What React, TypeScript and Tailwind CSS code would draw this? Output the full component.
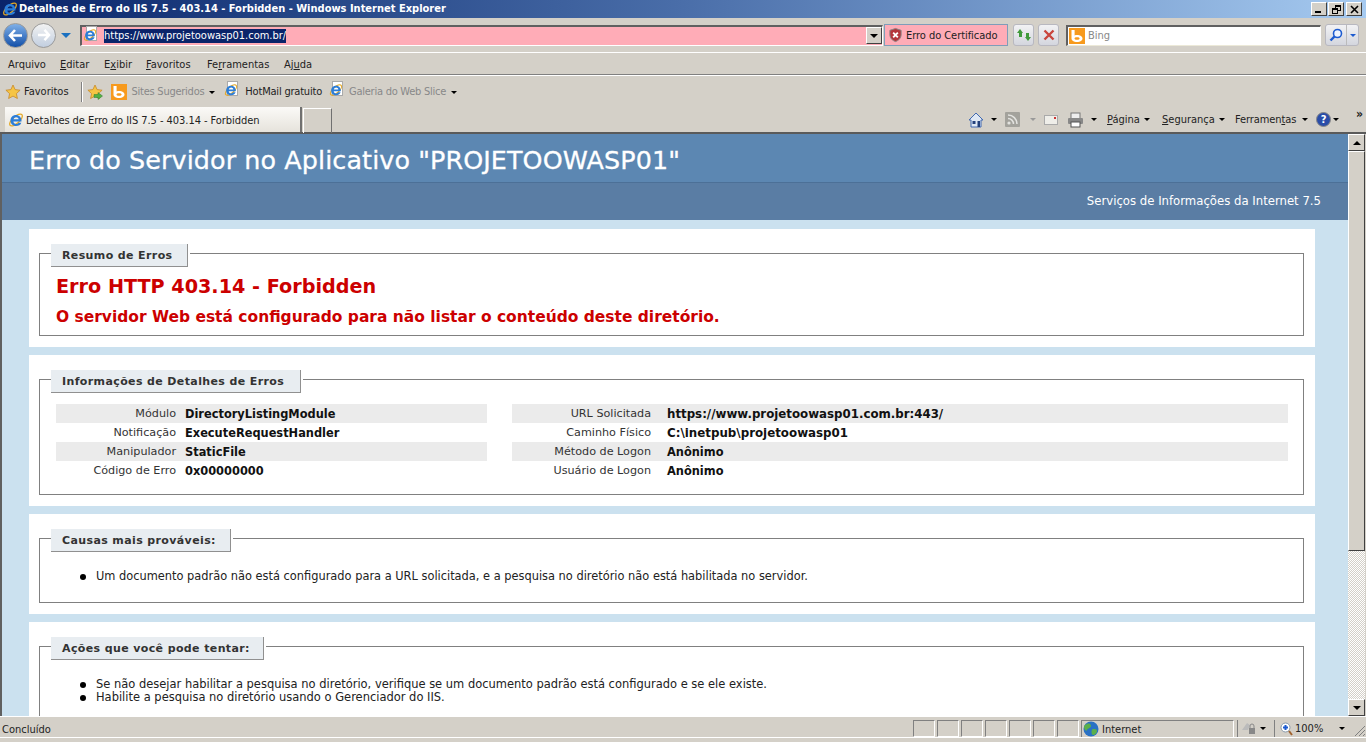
const Caret = ({ gray }: { gray?: boolean }) => (
  <span className={`inline-block w-0 h-0 border-x-[3px] border-x-transparent border-t-[3px] ${gray ? 'border-t-[#999]' : 'border-t-black'}`} />
);

const IeLogo = ({ size = 16 }: { size?: number }) => (
  <svg width={size} height={size} viewBox="0 0 16 16" className="shrink-0">
    <ellipse cx="8" cy="8" rx="8" ry="3.400" transform="rotate(-42 8 8)" fill="none" stroke="#e5a823" strokeWidth="1.300" />
    <path d="M2.500 8.500C2.500 5.200 5 3 8 3s5.500 2.200 5.500 5.800V9.500H5.400c.1 1.600 1.200 2.500 2.700 2.500 1.100 0 1.900-.4 2.400-1.300h2.800C12.600 12.800 10.600 14 8 14c-3.200 0-5.500-2.300-5.500-5.500Zm3-1.200h5.200C10.500 6 9.400 5.200 8.100 5.200S5.700 6 5.500 7.300Z" fill="#2b7dd8" />
  </svg>
);

const PageIe = () => (
  <span className="relative inline-block w-[16px] h-[16px] shrink-0">
    <span className="absolute left-[3px] top-0 w-[11px] h-[15px] bg-white border border-[#aaa]" />
    <span className="absolute left-0 top-[2px]"><IeLogo size={14} /></span>
  </span>
);

const BingLogo = ({ size = 16 }: { size?: number }) => (
  <svg width={size} height={size} viewBox="0 0 16 16" className="shrink-0">
    <rect width="16" height="16" fill="#f79a1d" />
    <path d="M2.500 2v8.500c0 2.200 2.500 3.500 5.500 3.500s5.500-1.300 5.500-3.500S11 7 8 7c-.9 0-1.700.1-2.400.4V2Zm5.500 7.200c1.600 0 2.600.5 2.600 1.300S9.600 11.800 8 11.800s-2.500-.5-2.500-1.300.9-1.300 2.500-1.300Z" fill="#fff" />
  </svg>
);

const Star = ({ size = 16, arrow }: { size?: number; arrow?: boolean }) => (
  <svg width={size} height={size} viewBox="0 0 16 16" className="shrink-0">
    <path d="M8 1l2.100 4.600 5 .6-3.700 3.400 1 4.900L8 12.100l-4.400 2.400 1-4.900L.9 6.200l5-.6Z" fill="#f6c544" stroke="#c8892a" strokeWidth="0.8" />
    {arrow && <path d="M7 10.500h4V8.500l4.500 3.500-4.500 3.500v-2H7Z" fill="#52b043" stroke="#2e7d2a" strokeWidth="0.5" />}
  </svg>
);

const WinBtn = ({ children }: { children: React.ReactNode }) => (
  <div className="w-[16px] h-[14px] bg-[#d4d0c8] border-t border-l border-white border-r border-b border-r-[#404040] border-b-[#404040] flex items-center justify-center">{children}</div>
);

const Fieldset = ({ legend, legendWidth, height, children }: { legend: string; legendWidth: number; height: number; children?: React.ReactNode }) => (
  <div className="ml-[27px] mr-[33px] bg-white pl-[10px] pr-[11px] pt-[24px] pb-[11px] mb-[8px]">
    <div className="relative border border-[#808080]" style={{ height }}>
      <div className="absolute left-[11px] top-[-10px] h-[23px] bg-white pr-[2px]">
        <div className="h-[23px] bg-[#e8edf1] border-r border-b border-[#909090] font-bold text-[11px] text-[#333] pl-[11px] leading-[23px] tracking-[0.38px] whitespace-nowrap" style={{ width: legendWidth }}>{legend}</div>
      </div>
      {children}
    </div>
  </div>
);

const Row = ({ label, value, shade, labelW, gap, size }: { label: string; value: string; shade: boolean; labelW: number; gap: number; size: number }) => (
  <div className={`flex h-[19px] items-center pt-[2px] text-[11px] ${shade ? 'bg-[#ebebeb]' : ''}`}>
    <div className="text-right text-[#333] shrink-0 text-[11.2px]" style={{ width: labelW }}>{label}</div>
    <div className="font-bold text-[#111]" style={{ marginLeft: gap, fontSize: size }}>{value}</div>
  </div>
);

const Bullet = ({ children }: { children: React.ReactNode }) => (
  <li className="relative leading-[13px] whitespace-nowrap">
    <span className="absolute left-[-16px] top-[4px] w-[6px] h-[6px] rounded-full bg-black" />
    {children}
  </li>
);

const chrome = '[font-family:"DejaVu_Sans_Condensed","DejaVu_Sans",sans-serif]';

export default function App() {
  return (
    <div className="w-[1366px] h-[742px] overflow-hidden bg-[#d4d0c8] flex flex-col text-black [font-family:'Noto_Sans',sans-serif]">
      {/* title bar */}
      <div className="h-[18px] shrink-0 flex items-center bg-gradient-to-r from-[#0a246a] via-[#4a6ea9] to-[#a6caf0] pl-[2px] pr-[4px]">
        <IeLogo size={16} />
        <span className={`ml-[1px] text-white font-bold text-[11px] whitespace-nowrap ${chrome}`}>Detalhes de Erro do IIS 7.5 - 403.14 - Forbidden - Windows Internet Explorer</span>
        <div className="ml-auto flex">
          <WinBtn><span className="block w-[6px] h-[2px] bg-black mt-[6px] mr-[2px]" /></WinBtn>
          <div className="w-[1px]" />
          <WinBtn><span className="relative block w-[9px] h-[9px]"><span className="absolute right-0 top-0 w-[6px] h-[6px] border border-t-2 border-black" /><span className="absolute left-0 bottom-0 w-[6px] h-[6px] border border-t-2 border-black bg-[#d4d0c8]" /></span></WinBtn>
          <div className="w-[2px]" />
          <WinBtn><svg width="9" height="9" viewBox="0 0 9 9"><path d="M1 1l7 7M8 1L1 8" stroke="#000" strokeWidth="1.600" /></svg></WinBtn>
        </div>
      </div>

      {/* address row */}
      <div className="h-[35px] shrink-0 relative flex items-center border-b border-white">
        <div className="ml-[3px] w-[25px] h-[25px] rounded-full bg-gradient-to-b from-[#7fb0e8] to-[#0f4fa8] border border-[#9a9a9a] flex items-center justify-center">
          <svg width="15" height="13" viewBox="0 0 15 13"><path d="M7 1L2 6.500 7 12M2.500 6.500H14" stroke="#fff" strokeWidth="2.600" fill="none" /></svg>
        </div>
        <div className="ml-[3px] w-[25px] h-[25px] rounded-full bg-gradient-to-b from-[#f2f2f2] to-[#c2cfe0] border border-[#9a9a9a] flex items-center justify-center">
          <svg width="14" height="12" viewBox="0 0 15 13"><path d="M8 1l5 5.500L8 12M12.500 6.500H1" stroke="#fff" strokeWidth="2.600" fill="none" /></svg>
        </div>
        <span className="ml-[5px] w-0 h-0 border-x-[5px] border-x-transparent border-t-[5px] border-t-[#1a70c0]" />
        <div className="ml-[9px] w-[803px] h-[21px] flex items-center bg-[#ffacb7] border-t-2 border-l-2 border-[#606060] border-r border-r-[#fff] border-b border-b-[#fff]">
          <span className="ml-[1px]"><PageIe /></span>
          <span className={`ml-[5px] mt-[1px] bg-[#0a246a] text-white text-[11px] leading-[14px] h-[14px] ${chrome}`}>https://www.projetoowasp01.com.br/</span>
          <div className="ml-auto w-[16px] h-[17px] bg-[#d4d0c8] border border-t-white border-l-white border-r-[#404040] border-b-[#404040] flex items-center justify-center"><span className="w-0 h-0 border-x-[4px] border-x-transparent border-t-[4px] border-t-black" /></div>
        </div>
        <div className="ml-[1px] w-[124px] h-[22px] flex items-center bg-[#ffacb7] border border-[#7f9db9]">
          <svg width="15" height="16" viewBox="0 0 16 16" className="ml-[3px] shrink-0"><path d="M8 1l6 2v5c0 3.500-3 6-6 7-3-1-6-3.500-6-7V3Z" fill="#b4353b" stroke="#888" /><path d="M5.500 5.500l5 5M10.500 5.500l-5 5" stroke="#fff" strokeWidth="2" /></svg>
          <span className={`ml-[3px] mt-[2px] text-[11px] text-[#222] whitespace-nowrap tracking-[-0.05px] ${chrome}`}>Erro do Certificado</span>
        </div>
        <div className="ml-[5px] w-[21px] h-[22px] rounded-[3px] border border-[#b8b8c0] bg-gradient-to-b from-[#f2f2f4] to-[#d4d6de] flex items-center justify-center">
          <svg width="16" height="14" viewBox="0 0 16 14"><path d="M4 1L1 5h2v4h3V5h1ZM12 13l3-4h-2V5h-3v4H9Z" fill="#3f9a3a" /></svg>
        </div>
        <div className="ml-[4px] w-[21px] h-[22px] rounded-[3px] border border-[#b8b8c0] bg-gradient-to-b from-[#f2f2f4] to-[#d4d6de] flex items-center justify-center">
          <svg width="12" height="12" viewBox="0 0 12 12"><path d="M1.500 1.500l9 9M10.500 1.500l-9 9" stroke="#c9453d" strokeWidth="2.400" /></svg>
        </div>
        <div className="ml-[7px] w-[255px] h-[21px] flex items-center bg-white border-t-2 border-l-2 border-[#606060] border-r border-b border-r-white border-b-[#ece9d8]">
          <span className="ml-[1px]"><BingLogo /></span>
          <span className={`ml-[3px] mt-[2px] text-[11px] text-[#888] ${chrome}`}>Bing</span>
        </div>
        <div className="ml-[4px] w-[34px] h-[22px] rounded-[3px] border border-[#b8b8c0] bg-gradient-to-b from-[#f2f2f4] to-[#d4d6de] flex items-center">
          <div className="w-[21px] flex items-center justify-center border-r border-[#bbb] h-full">
            <svg width="14" height="14" viewBox="0 0 14 14"><circle cx="8.500" cy="5.500" r="4" fill="#eef4ff" stroke="#1c5bd0" strokeWidth="1.600" /><path d="M5.500 8.500L1.500 12.500" stroke="#1c5bd0" strokeWidth="2.400" /></svg>
          </div>
          <span className="ml-[3px] w-0 h-0 border-x-[3px] border-x-transparent border-t-[3px] border-t-[#1c5bd0]" />
        </div>
      </div>

      {/* menu bar */}
      <div className={`h-[22px] shrink-0 flex items-center pl-[8px] pt-[3px] text-[11px] text-[#222] border-b border-[#808080] ${chrome}`}>
        <span className="w-[52px]">Arquivo</span>
        <span className="w-[44px]"><u>E</u>ditar</span>
        <span className="w-[42px]">E<u>x</u>ibir</span>
        <span className="w-[61px]"><u>F</u>avoritos</span>
        <span className="w-[77px]">Fe<u>r</u>ramentas</span>
        <span className="w-[40px]">Aj<u>u</u>da</span>
      </div>

      {/* favorites bar */}
      <div className={`h-[29px] shrink-0 flex items-center pl-[5px] pt-[3px] text-[11px] text-[#222] border-t border-white ${chrome}`}>
        <Star />
        <span className="ml-[3px] mt-[2px]">Favoritos</span>
        <span className="ml-[12px] w-[2px] h-[20px] border-l border-[#808080] border-r border-r-white" />
        <span className="ml-[4px]"><Star arrow /></span>
        <span className="ml-[8px]"><BingLogo /></span>
        <span className="ml-[5px] mt-[2px] text-[#888] tracking-[-0.25px]">Sites Sugeridos</span>
        <span className="ml-[5px] mt-[1px] flex"><Caret /></span>
        <span className="ml-[9px]"><PageIe /></span>
        <span className="ml-[5px] mt-[2px] tracking-[-0.2px]">HotMail gratuito</span>
        <span className="ml-[7px]"><PageIe /></span>
        <span className="ml-[4px] mt-[2px] text-[#888] tracking-[-0.25px]">Galeria do Web Slice</span>
        <span className="ml-[5px] mt-[1px] flex"><Caret /></span>
      </div>

      {/* tab row */}
      <div className={`h-[30px] shrink-0 flex text-[11px] text-[#222] pl-[5px] pt-[3px] border-b-2 border-[#5a5a5a] ${chrome}`}>
        <div className="w-[297px] h-[25px] bg-gradient-to-b from-[#fbfaf7] to-[#e6e3dc] flex items-center pl-[3px] border-r-2 border-[#707070]">
          <IeLogo size={16} />
          <span className="ml-[2px] mt-[3px] whitespace-nowrap tracking-[-0.05px]">Detalhes de Erro do IIS 7.5 - 403.14 - Forbidden</span>
        </div>
        <div className="ml-[1px] w-[29px] h-[25px] mt-[1px] border-t border-l border-white border-r border-r-[#707070]" />
        <div className="ml-auto flex items-center h-[24px] pr-[3px] pt-[1px]">
          <svg width="16" height="16" viewBox="0 0 16 16"><path d="M8 1L1 8h2v7h10V8h2Z" fill="#dfe8f5" stroke="#4169b0" /><rect x="4.500" y="9" width="3" height="3" fill="#24417c" /><rect x="9.500" y="9" width="2.500" height="6" fill="#24417c" /></svg>
          <span className="ml-[7px] flex"><Caret /></span>
          <svg width="15" height="15" viewBox="0 0 15 15" className="ml-[8px]"><rect width="15" height="15" rx="1" fill="#a3a29c" /><circle cx="4" cy="11" r="1.600" fill="#e3e3e0" /><path d="M3 6.500a5.500 5.500 0 0 1 5.500 5.500M3 3a9 9 0 0 1 9 9" stroke="#e3e3e0" strokeWidth="1.500" fill="none" /></svg>
          <span className="ml-[10px] flex"><Caret gray /></span>
          <span className="ml-[8px] w-[14px] h-[10px] bg-[#efeee9] border border-[#aaa] relative"><span className="absolute right-[1px] top-[1px] w-[2px] h-[2px] bg-[#c33]" /></span>
          <svg width="17" height="16" viewBox="0 0 17 16" className="ml-[9px]"><rect x="4" y="1" width="9" height="6" fill="#eee" stroke="#777" /><rect x="1" y="6" width="15" height="6" rx="1" fill="#888" /><rect x="4" y="10" width="9" height="5" fill="#fff" stroke="#555" /></svg>
          <span className="ml-[7px] flex"><Caret /></span>
          <span className="ml-[10px] mt-[2px] w-[33px]"><u>P</u>ágina</span><span className="ml-[4px] flex"><Caret /></span>
          <span className="ml-[12px] mt-[2px] w-[52px]"><u>S</u>egurança</span><span className="ml-[5px] flex"><Caret /></span>
          <span className="ml-[10px] mt-[2px] w-[62px] tracking-[-0.1px] whitespace-nowrap">Ferramen<u>t</u>as</span><span className="ml-[5px] flex"><Caret /></span>
          <span className="ml-[8px] w-[15px] h-[15px] rounded-full bg-[#2a4da8] border border-[#888] text-white font-bold text-[11px] leading-[13px] text-center">?</span>
          <span className="ml-[2px] flex"><Caret /></span>
          <span className="ml-[17px] -mt-[12px] text-[12px] font-bold leading-none">»</span>
        </div>
      </div>

      {/* page + scrollbar */}
      <div className="flex-1 min-h-0 flex overflow-hidden border-l-2 border-[#606060] pr-[1px]">
        <div className="flex-1 min-w-0 bg-[#cbe1ef] overflow-hidden [font-family:'DejaVu_Sans',sans-serif]">
          <div className="h-[49px] bg-[#5c87b2] border-b border-[#4c7097] pl-[27px] text-white text-[25.4px] leading-[53px] tracking-[0.1px] [-webkit-text-stroke:0.3px_white] whitespace-nowrap">Erro do Servidor no Aplicativo "PROJETOOWASP01"</div>
          <div className="h-[37px] bg-[#5a7da4] text-right pr-[27px] text-white text-[11.7px] leading-[36px]">Serviços de Informações da Internet 7.5</div>

          <div className="pt-[9px]">
            <Fieldset legend="Resumo de Erros" legendWidth={137} height={83}>
              <div className="pl-[16px] pt-[20px] font-bold text-[#cc0000]">
                <div className="text-[19.2px] leading-[26px]">Erro HTTP 403.14 - Forbidden</div>
                <div className="text-[15.47px] leading-[19px] mt-[8px] whitespace-nowrap">O servidor Web está configurado para não listar o conteúdo deste diretório.</div>
              </div>
            </Fieldset>
            <Fieldset legend="Informações de Detalhes de Erros" legendWidth={250} height={116}>
              <div className="flex pl-[16px] pt-[24px] gap-[25px] pr-[15px]">
                <div className="w-[431px]">
                  <Row label="Módulo" value="DirectoryListingModule" shade labelW={120} gap={9} size={11.4} />
                  <Row label="Notificação" value="ExecuteRequestHandler" shade={false} labelW={120} gap={9} size={11.4} />
                  <Row label="Manipulador" value="StaticFile" shade labelW={120} gap={9} size={11.4} />
                  <Row label="Código de Erro" value="0x00000000" shade={false} labelW={120} gap={9} size={11.4} />
                </div>
                <div className="flex-1">
                  <Row label="URL Solicitada" value="https://www.projetoowasp01.com.br:443/" shade labelW={139} gap={16} size={11.8} />
                  <Row label="Caminho Físico" value="C:\inetpub\projetoowasp01" shade={false} labelW={139} gap={16} size={11.85} />
                  <Row label="Método de Logon" value="Anônimo" shade labelW={139} gap={16} size={11.4} />
                  <Row label="Usuário de Logon" value="Anônimo" shade={false} labelW={139} gap={16} size={11.4} />
                </div>
              </div>
            </Fieldset>
            <Fieldset legend="Causas mais prováveis:" legendWidth={180} height={65}>
              <ul className="pl-[56px] pt-[31px] text-[11.4px] text-[#222]">
                <Bullet>Um documento padrão não está configurado para a URL solicitada, e a pesquisa no diretório não está habilitada no servidor.</Bullet>
              </ul>
            </Fieldset>
            <Fieldset legend="Ações que você pode tentar:" legendWidth={213} height={120}>
              <ul className="pl-[56px] pt-[31px] text-[11.47px] text-[#222]">
                <Bullet>Se não desejar habilitar a pesquisa no diretório, verifique se um documento padrão está configurado e se ele existe.</Bullet>
                <Bullet>Habilite a pesquisa no diretório usando o Gerenciador do IIS.</Bullet>
              </ul>
              <div className="pl-[97px] mt-[12px] text-[11.4px] leading-[13px] text-[#222]">Abra o Gerenciador do IIS.</div>
            </Fieldset>
          </div>
        </div>
        {/* scrollbar */}
        <div className="w-[17px] shrink-0 flex flex-col bg-[repeating-conic-gradient(#d4d0c8_0%_25%,#fff_0%_50%)] bg-[length:2px_2px]">
          <div className="h-[17px] bg-[#d4d0c8] border border-t-white border-l-white border-r-[#404040] border-b-[#404040] flex items-center justify-center"><span className="w-0 h-0 border-x-[4px] border-x-transparent border-b-[4px] border-b-black" /></div>
          <div className="h-[400px] bg-[#d4d0c8] border border-t-white border-l-white border-r-[#404040] border-b-[#404040]" />
          <div className="mt-auto h-[17px] bg-[#d4d0c8] border border-t-white border-l-white border-r-[#404040] border-b-[#404040] flex items-center justify-center"><span className="w-0 h-0 border-x-[4px] border-x-transparent border-t-[4px] border-t-black" /></div>
        </div>
      </div>

      {/* status bar */}
      <div className={`h-[26px] shrink-0 text-[11px] text-[#222] border-t border-white pt-[3px] ${chrome}`}>
        <div className="h-[18px] flex items-center pl-[2px] border-b border-white">
          <span className="mt-[3px]">Concluído</span>
          <div className="ml-auto flex h-[17px]">
            {[0, 1, 2, 3, 4, 5, 6].map(i => (
              <div key={i} className="w-[22px] mr-[2px] border-t border-l border-[#808080] border-r border-b border-r-white border-b-white" />
            ))}
            <div className="w-[153px] flex items-center border-t border-l border-[#808080] border-r border-r-white pl-[1px]">
              <svg width="16" height="16" viewBox="0 0 16 16"><circle cx="8" cy="8" r="7.500" fill="#2a71c4" /><path d="M4 3c2-1 4 0 4 2S5 7 4 9 1 8 1 6s1-2 3-3ZM10 8c2 0 4 0 4 2s-2 4-4 4-2-6 0-6Z" fill="#5bb04a" /></svg>
              <span className="ml-[3px] mt-[2px]">Internet</span>
            </div>
            <div className="w-[34px] ml-[3px] flex items-center border-l border-[#808080] pl-[3px]">
              <svg width="16" height="15" viewBox="0 0 16 15"><path d="M1 9l5-7 3 2-2 5Z" fill="#bbb" /><rect x="8" y="7" width="6" height="6" fill="#888" /><path d="M9 7V5a2 2 0 0 1 4 0v2" stroke="#888" fill="none" /></svg>
              <span className="ml-[3px] flex"><Caret /></span>
            </div>
            <div className="relative w-[92px] ml-[3px] flex items-center border-l border-[#808080] pl-[5px]">
              <svg width="13" height="14" viewBox="0 0 13 14"><circle cx="5.500" cy="5.500" r="4.500" fill="#fff" stroke="#89a" /><path d="M5.500 3v5M3 5.500h5" stroke="#1c5bd0" strokeWidth="2" /><path d="M9 9l3 4" stroke="#a0622d" strokeWidth="2" /></svg>
              <span className="ml-[2px] mt-[2px]">100%</span>
              <span className="ml-[16px] flex"><Caret /></span>
              <svg width="12" height="12" viewBox="0 0 12 12" className="absolute right-0 bottom-0"><path d="M11 1L1 11M11 5L5 11M11 9L9 11" stroke="#808080" /></svg>
            </div>
          </div>
        </div>
      </div>
    </div>
  );
}
